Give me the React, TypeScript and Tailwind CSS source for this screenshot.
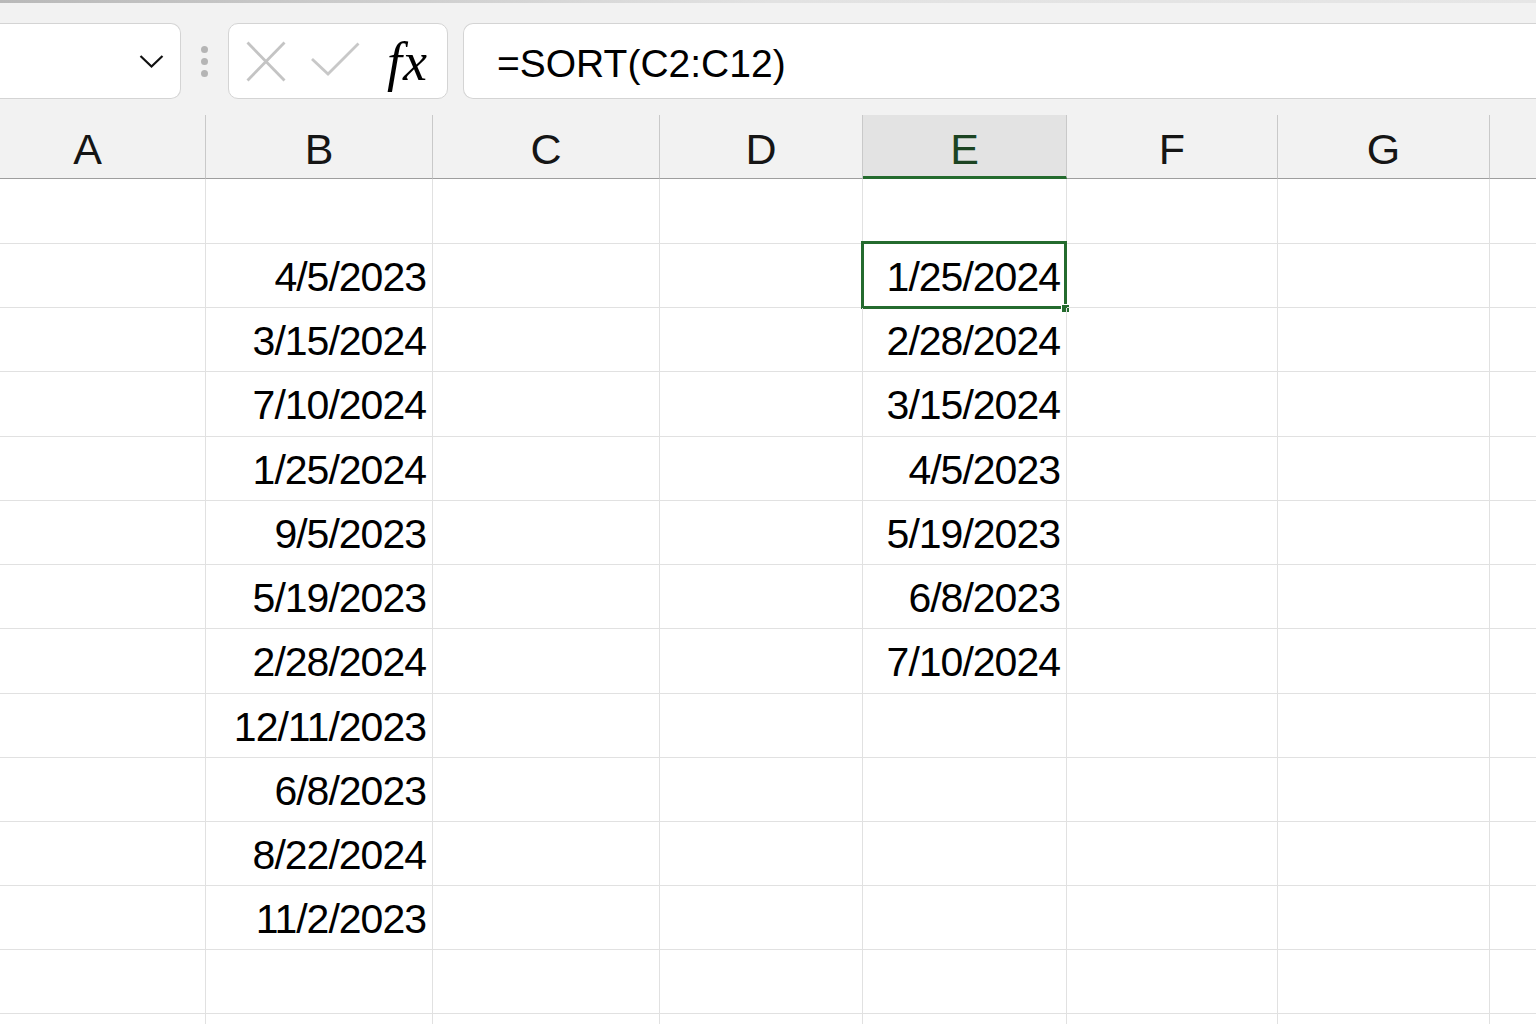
import React from 'react';

const cols = [
  { key: 'A', w: 'w-[206px]', pad: 'pr-[30px]' },
  { key: 'B', w: 'w-[227px]', pad: '' },
  { key: 'C', w: 'w-[227px]', pad: '' },
  { key: 'D', w: 'w-[203px]', pad: '' },
  { key: 'E', w: 'w-[204px]', pad: '' },
  { key: 'F', w: 'w-[211px]', pad: '' },
  { key: 'G', w: 'w-[212px]', pad: '' },
  { key: '', w: 'w-[60px]', pad: '' },
];

const colB = ['', '4/5/2023', '3/15/2024', '7/10/2024', '1/25/2024', '9/5/2023', '5/19/2023', '2/28/2024', '12/11/2023', '6/8/2023', '8/22/2024', '11/2/2023', '', ''];
const colE = ['', '1/25/2024', '2/28/2024', '3/15/2024', '4/5/2023', '5/19/2023', '6/8/2023', '7/10/2024', '', '', '', '', '', ''];
const rowHeights = ['h-[65px]', 'h-[64px]', 'h-[64px]', 'h-[65px]', 'h-[64px]', 'h-[64px]', 'h-[64px]', 'h-[65px]', 'h-[64px]', 'h-[64px]', 'h-[64px]', 'h-[64px]', 'h-[64px]', 'h-[64px]'];

const sans = "font-['Liberation_Sans',Arial,sans-serif]";

function Cell({ col, row, width }: { col: string; row: number; width: string }) {
  const value = col === 'B' ? colB[row] : col === 'E' ? colE[row] : '';
  const selected = col === 'E' && row === 1;
  return (
    <div className={`${width} shrink-0 relative flex items-start justify-end pt-[13px] pr-[6px] border-r border-b border-[#e1e1e1]`}>
      {value && (
        <span className={`${sans} text-[41px] leading-none tracking-[-1px] text-black`}>{value}</span>
      )}
      {selected && (
        <div className="absolute -left-[2px] -top-[3px] -right-[1px] -bottom-[2px] border-[3px] border-[#246b2e]">
          <div className="absolute -right-[6px] -bottom-[7px] w-[9px] h-[9px] bg-[#246b2e] border border-white" />
        </div>
      )}
    </div>
  );
}

export default function App() {
  return (
    <div className="w-[1536px] h-[1024px] overflow-hidden bg-white">
      {/* Toolbar + column headers */}
      <div className="bg-[#f2f2f2]">
        <div className="h-[3px] bg-gradient-to-r from-[#b9b9b9] via-[#e2e2e2] to-[#e6e6e6]" />
        <div className="flex items-stretch pt-[20px] h-[96px]">
          {/* Name box */}
          <div className="w-[181px] h-[76px] shrink-0 bg-white border border-l-0 border-[#d4d4d4] rounded-r-[10px] flex items-center justify-end pr-[16px]">
            <svg width="25" height="15" viewBox="0 0 25 15" fill="none">
              <polyline points="1.5,2 12.5,12.5 23.5,2" stroke="#111" strokeWidth="2.2" />
            </svg>
          </div>
          <div className="w-[47px] shrink-0 flex flex-col items-center justify-center gap-[5px]">
            <span className="w-[7px] h-[7px] rounded-full bg-[#b5b5b5]" />
            <span className="w-[7px] h-[7px] rounded-full bg-[#b5b5b5]" />
            <span className="w-[7px] h-[7px] rounded-full bg-[#b5b5b5]" />
          </div>
          {/* Cancel / enter / fx */}
          <div className="w-[220px] h-[76px] shrink-0 bg-white border border-[#d4d4d4] rounded-[10px] flex items-center pl-[17px]">
            <svg width="40" height="41" viewBox="0 0 40 41" fill="none">
              <line x1="1.5" y1="1.5" x2="38.5" y2="39.5" stroke="#c4c4c4" strokeWidth="2.8" />
              <line x1="38.5" y1="1.5" x2="1.5" y2="39.5" stroke="#c4c4c4" strokeWidth="2.8" />
            </svg>
            <svg width="49" height="34" viewBox="0 0 49 34" fill="none" className="ml-[25px] -mt-[5px]">
              <polyline points="1,17 17,32 47.5,1.5" stroke="#c8c8c8" strokeWidth="2.8" />
            </svg>
            <span className="ml-[27px] font-['Liberation_Serif','Times_New_Roman',serif] italic text-[54px] leading-none tracking-[1px] text-black mt-[2px]">fx</span>
          </div>
          {/* Formula bar */}
          <div className="flex-1 h-[76px] ml-[15px] bg-white border border-r-0 border-[#d4d4d4] rounded-l-[10px] flex items-start pt-[20px] pl-[33px]">
            <span className={`${sans} text-[39px] leading-none text-black`}>=SORT(C2:C12)</span>
          </div>
        </div>
        <div className="flex mt-[16px] h-[64px]">
          {cols.map((c, i) => (
            <div
              key={i}
              className={`${c.w} ${c.pad} shrink-0 flex justify-center items-start pt-[13px] border-r border-r-[#c9c9c9] ${
                c.key === 'E' ? 'bg-[#e3e3e3] border-b-[3px] border-b-[#246b2e]' : 'border-b border-b-[#9e9e9e]'
              }`}
            >
              <span className={`${sans} text-[43px] leading-none ${c.key === 'E' ? 'text-[#1c4422]' : 'text-[#151515]'}`}>{c.key}</span>
            </div>
          ))}
        </div>
      </div>

      {/* Grid */}
      <div className="flex flex-col">
        {rowHeights.map((h, r) => (
          <div key={r} className={`flex ${h}`}>
            {cols.map((c, i) => (
              <Cell key={i} col={c.key} row={r} width={c.w} />
            ))}
          </div>
        ))}
      </div>
    </div>
  );
}
